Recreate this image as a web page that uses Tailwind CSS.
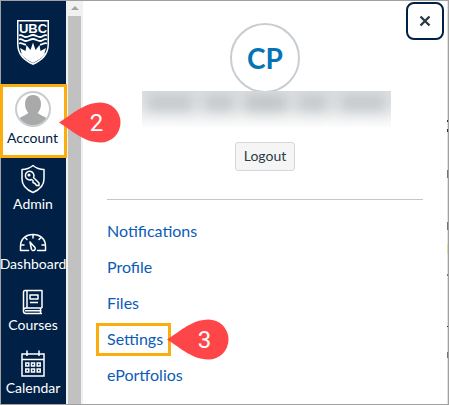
<!DOCTYPE html>
<html lang="en">
<head>
<meta charset="utf-8">
<title>Account</title>
<script src="https://cdn.jsdelivr.net/npm/@tailwindcss/browser@4"></script>
</head>
<body class="bg-white font-['Lato','Noto_Sans',sans-serif]">
<div class="flex min-h-screen border border-[#a0a0a0] bg-white">
  <!-- Global navigation -->
  <nav class="relative flex w-[65px] shrink-0 flex-col bg-[#002145] pr-px text-[14px] leading-5 text-white">
    <a href="#" class="flex h-[83px] items-center justify-center" aria-label="UBC home">
      <svg width="34" height="48" viewBox="0 0 34 48">
        <path d="M1 1H33V25C33 36 26 42 17 46C8 42 1 36 1 25Z" fill="#fff"/>
        <path d="M2.500 2.500H31.500V25C31.500 35 25 40.500 17 44.200C9 40.500 2.500 35 2.500 25Z" fill="#002145"/>
        <text x="17" y="13.500" text-anchor="middle" font-family="Liberation Sans" font-weight="bold" font-size="13" fill="#fff">UBC</text>
        <g fill="none" stroke="#fff" stroke-width="1.800">
          <path d="M3 16.500C6 15 7 18 10 18S14 16 17 16S21 18 24 18S28 15 31 16.500"/>
          <path d="M3 20.500C6 19 7 22 10 22S14 20 17 20S21 22 24 22S28 19 31 20.500"/>
          <path d="M3 24.500C6 23 7 26 10 25.500M31 24.500C28 23 27 26 24 25.500"/>
        </g>
        <path d="M17 23.500L19.500 31L23.500 26L24.500 32L30 29L28.500 34L29 35C26 39 22 41.500 17 44C12 41.500 8 39 5 35L5.500 34L4 29L9.500 32L10.500 26L14.500 31Z" fill="#fff"/>
      </svg>
    </a>
    <a href="#" class="-ml-px -mr-0.5 flex h-[74px] flex-col items-center border-3 border-[#fbad0e] bg-white pr-0.5 pt-1 text-[#002145]">
      <svg width="36" height="36" viewBox="0 0 36 36">
        <defs><clipPath id="face"><circle cx="18" cy="18" r="16.500"/></clipPath></defs>
        <circle cx="18" cy="18" r="17" fill="#fff"/>
        <g clip-path="url(#face)" fill="#a9a9a9">
          <path d="M18 4C23.500 4 26 8 26 13C26 17 24.500 20 22.500 22H13.500C11.500 20 10 17 10 13C10 8 12.500 4 18 4Z"/>
          <path d="M3 36V30C4 25 11 25 13.500 21.500H22.500C25 25 32 25 33 30V36Z"/>
        </g>
        <circle cx="18" cy="18" r="17" fill="none" stroke="#c7cdd1" stroke-width="2"/>
      </svg>
      <span class="mt-px">Account</span>
    </a>
    <a href="#" class="flex h-[61px] flex-col items-center pt-1.5">
      <svg width="26" height="30" viewBox="0 0 26 30" fill="none" stroke="#fff" stroke-width="1.500" stroke-linejoin="round">
        <path d="M13 1.500C16 4 20 5.500 24 5.500V15C24 21.500 19 26 13 28.500C7 26 2 21.500 2 15V5.500C6 5.500 10 4 13 1.500Z"/>
        <path d="M13.500 13.500L19 19V21.500H16.500L15 19.500L13 18.500V16.500L11.500 15.500A4.300 4.300 0 1 1 13.800 12.800Z"/>
        <circle cx="9" cy="11" r="0.800"/>
      </svg>
      <span>Admin</span>
    </a>
    <a href="#" class="flex h-[61px] flex-col items-center pt-[7px]">
      <svg width="28" height="28" viewBox="0 0 28 28" fill="none" stroke="#fff" stroke-width="1.500" stroke-linecap="round" stroke-linejoin="round">
        <path d="M9.500 24.500H1.500V20C1.500 13 7 8.500 14 8.500S26.500 13 26.500 20V24.500H18.500"/>
        <path d="M14 9V12M6.500 12L8 13.500M21.500 12L20 13.500M2.500 19H5M23 19H25.500"/>
        <path d="M11 16L16 21.500A2 2 0 1 1 12.500 23.500Z"/>
      </svg>
      <span>Dashboard</span>
    </a>
    <a href="#" class="flex h-[61px] flex-col items-center pt-[7px]">
      <svg width="28" height="28" viewBox="0 0 28 28" fill="none" stroke="#fff" stroke-width="1.500" stroke-linejoin="round">
        <path d="M23 21H7C3.500 21 3.500 26.500 7 26.500H23M23 21V3.500H6C4.800 3.500 4.500 4.500 4.500 5.500V23M8 4V21M6 23.800H22.500M21.500 21V26"/>
        <path d="M11 8H19V12H11ZM11 15.500H19"/>
      </svg>
      <span>Courses</span>
    </a>
    <a href="#" class="flex flex-col items-center pt-[9px]">
      <svg width="28" height="28" viewBox="0 0 28 28" fill="none" stroke="#fff" stroke-width="1.500">
        <path d="M3 4H25V26H3ZM3 9.500H25M8 0.500V6M20 0.500V6"/>
        <path d="M6.800 13H9.800V16H6.800ZM12.500 13H15.500V16H12.500ZM18.200 13H21.200V16H18.200ZM6.800 19H9.800V22H6.800ZM12.500 19H15.500V22H12.500ZM18.200 19H21.200V22H18.200Z"/>
      </svg>
      <span>Calendar</span>
    </a>
    <!-- Step 2 marker -->
    <svg class="absolute left-[58px] top-[101px] z-10" width="62" height="41" viewBox="0 0 62 41" role="img" aria-label="Step 2">
      <path d="M0 20.500C10 15 24 0.500 41.500 0.500A20 20 0 0 1 41.500 40.500C24 40.500 10 26 0 20.500Z" fill="#fe4649"/>
      <text x="37.500" y="29" text-anchor="middle" font-family="Roboto" font-size="24" fill="#fff">2</text>
    </svg>
  </nav>
  <!-- Scroll track -->
  <div class="flex w-[17px] shrink-0 flex-col items-center bg-[#f1f1f1]" aria-hidden="true">
    <svg width="17" height="15" viewBox="0 0 17 15"><path d="M5 9H13L9 5Z" fill="#a3a3a3"/></svg>
    <div class="w-[13px] grow bg-[#c1c1c1]"></div>
  </div>
  <!-- Account tray -->
  <main class="relative flex grow flex-col border-r border-[#e2e2e2] px-6 pt-[22px] text-[16px]">
    <button aria-label="Close" class="absolute right-[3px] top-px flex h-[38px] w-[38px] items-center justify-center rounded-lg border-2 border-[#002145] bg-white">
      <svg width="12" height="12" viewBox="0 0 12 12"><path d="M1.500 1.500L10.500 10.500M10.500 1.500L1.500 10.500" stroke="#2d3b45" stroke-width="2.400"/></svg>
    </button>
    <!-- Slivers of the page that the tray covers -->
    <svg class="absolute -right-px top-0" width="1" height="403" viewBox="0 0 1 403" aria-hidden="true">
      <path d="M0 119H1V121H0ZM0 128H1V131H0ZM0 325H1V326H0Z" fill="#333"/>
      <path d="M0 169H1V177H0ZM0 221H1V229H0ZM0 351H1V357H0Z" fill="#7d7565"/>
      <path d="M0 243H1V253H0Z" fill="#ded79a"/>
      <path d="M0 273H1V275H0Z" fill="#a06e5c"/>
    </svg>
    <div class="flex flex-col items-center">
      <div class="flex h-[70px] w-[70px] items-center justify-center rounded-full border-2 border-[#c7cdd1] text-[28px] font-bold leading-none text-[#0374b5]">CP</div>
      <div class="relative z-10 -mt-0.5 ml-0.5 flex h-9 w-[249px] justify-between overflow-hidden bg-linear-to-b from-[#dfe1e3] via-[#e9ebec] to-[#fcfcfc] px-1 pt-1" aria-hidden="true">
        <span class="h-4 w-12 bg-[#a9afb4]/60 blur-[7px]"></span>
        <span class="h-4 w-8 bg-[#a9afb4]/60 blur-[7px]"></span>
        <span class="h-4 w-11 bg-[#a9afb4]/70 blur-[7px]"></span>
        <span class="h-4 w-8 bg-[#a9afb4]/60 blur-[7px]"></span>
        <span class="h-4 w-12 bg-[#a9afb4]/60 blur-[7px]"></span>
      </div>
      <button class="mt-[15px] h-[29px] w-[60px] rounded-[3px] border border-[#d4d7d9] bg-[#f5f5f5] pb-0.5 text-[14px] leading-5 text-[#2d3b45]">Logout</button>
    </div>
    <hr class="mt-7 border-[#c7c7c7]">
    <ul class="mt-[13px] leading-9 text-[#0b5cb8]">
      <li><a href="#">Notifications</a></li>
      <li><a href="#">Profile</a></li>
      <li><a href="#">Files</a></li>
      <li class="relative -ml-[11px] flex h-9 w-[75px] items-center">
        <a href="#" class="flex h-[33px] w-full items-center border-3 border-[#fbad0e] pl-2 leading-6">Settings</a>
        <!-- Step 3 marker -->
        <svg class="absolute left-[71px] top-0 -mt-0.5" width="62" height="41" viewBox="0 0 62 41" role="img" aria-label="Step 3">
          <path d="M0 20.500C10 15 24 0.500 41.500 0.500A20 20 0 0 1 41.500 40.500C24 40.500 10 26 0 20.500Z" fill="#fe4649"/>
          <text x="37.500" y="29" text-anchor="middle" font-family="Roboto" font-size="24" fill="#fff">3</text>
        </svg>
      </li>
      <li><a href="#">ePortfolios</a></li>
    </ul>
  </main>
</div>
</body>
</html>
